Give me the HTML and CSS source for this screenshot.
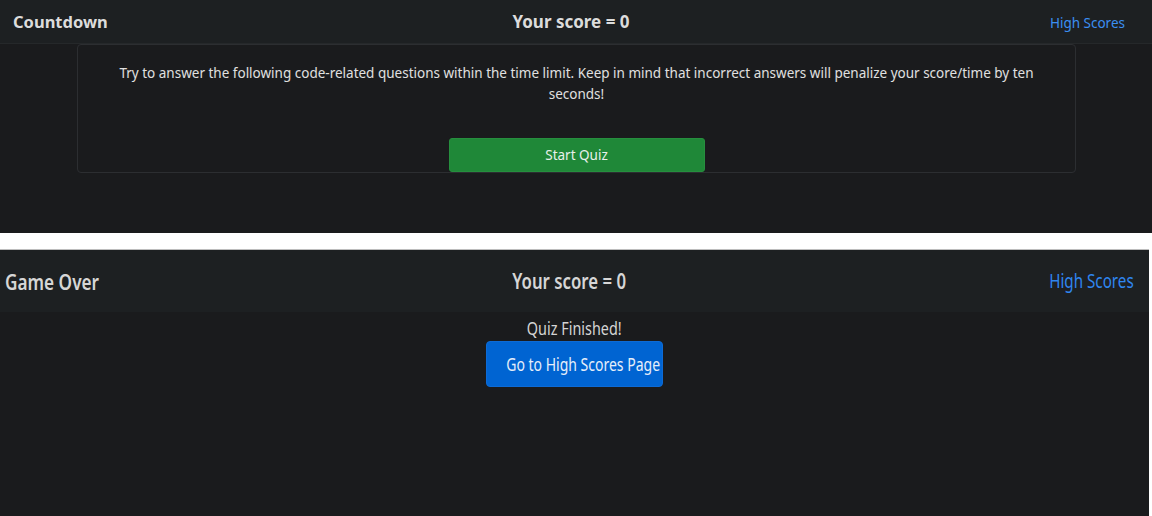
FILE: index.html
```html
<!DOCTYPE html>
<html>
<head>
<meta charset="utf-8">
<link rel="stylesheet" href="styles.css">
</head>
<body>
<section class="shot shot-top">
  <nav class="nav">
    <div class="nav-title">Countdown</div>
    <div class="nav-score">Your score = 0</div>
    <div class="nav-link-wrap"><a class="nav-link" href="#">High Scores</a></div>
  </nav>
  <div class="card">
    <p class="intro">Try to answer the following code-related questions within the time limit. Keep in mind that incorrect answers will penalize your score/time by ten seconds!</p>
    <button class="btn-start">Start Quiz</button>
  </div>
</section>
<div class="divider"></div>
<section class="shot shot-bottom">
  <nav class="nav2">
    <div class="nav2-title"><span class="cond cond-left">Game Over</span></div>
    <div class="nav2-score"><span class="cond">Your score = 0</span></div>
    <div class="nav2-link-wrap"><a class="nav2-link" href="#"><span class="cond cond-right">High Scores</span></a></div>
  </nav>
  <div class="finish">
    <div class="finish-text"><span class="cond">Quiz Finished!</span></div>
    <button class="btn-hs"><span class="cond">Go to High Scores Page</span></button>
  </div>
</section>
</body>
</html>
```
FILE: styles.css
```css
* { box-sizing: border-box; }
html, body { margin: 0; padding: 0; }
body {
  background: #ffffff;
  width: 1152px;
  height: 516px;
  overflow: hidden;
  font-family: "Noto Sans", "Open Sans", sans-serif;
  color: #dee2e6;
}
.shot-top {
  height: 233px;
  background: #1a1b1d;
}
.nav {
  height: 44px;
  background: #1d2022;
  border-bottom: 1px solid #25282a;
  display: grid;
  grid-template-columns: 1fr auto 1fr;
  align-items: center;
  padding: 0 27px 0 13px;
}
.nav-title {
  font-size: 16.5px;
  font-weight: 700;
  color: #dcdcdc;
}
.nav-score {
  font-size: 17px;
  font-weight: 700;
  color: #dcdcdc;
  padding-left: 4px;
}
.nav-link-wrap { text-align: right; }
.nav-link {
  font-size: 13.5px;
  color: #3b8ff2;
  text-decoration: none;
}
.card {
  margin: 0 76px 0 77px;
  border: 1px solid #2c2e31;
  border-radius: 4px;
  display: flex;
  flex-direction: column;
  align-items: center;
  padding: 18px 30px 0;
  height: 129px;
}
.intro {
  margin: 0;
  font-size: 13.5px;
  line-height: 21px;
  text-align: center;
  color: #e0e0e0;
}
.btn-start {
  margin-top: 33px;
  width: 256px;
  height: 34px;
  background: #1f8838;
  border: 1px solid #268f3e;
  border-radius: 3px;
  color: #e8f0ea;
  font-family: inherit;
  font-size: 13.5px;
}
.divider {
  height: 16px;
  background: #ffffff;
}
.shot-bottom {
  width: 1149px;
  height: 267px;
  background: #1a1b1d;
  border-top: 1px solid #bdbdbd;
}
.cond {
  display: inline-block;
  white-space: nowrap;
  transform: scaleX(0.8);
  transform-origin: center;
}
.cond-left { transform-origin: left center; }
.cond-right { transform-origin: right center; }
.nav2 {
  height: 62px;
  background: #1d2022;
  display: grid;
  grid-template-columns: 1fr auto 1fr;
  align-items: center;
  padding: 0 15px 0 5px;
}
.nav2-title {
  font-size: 21.5px;
  font-weight: 600;
  color: #d6d6d6;
}
.nav2-score {
  font-size: 21px;
  font-weight: 600;
  color: #d6d6d6;
}
.nav2-link-wrap { text-align: right; }
.nav2-link {
  font-size: 19px;
  color: #2f86f0;
  text-decoration: none;
}
.finish {
  display: flex;
  flex-direction: column;
  align-items: center;
  padding-top: 4px;
}
.finish-text {
  font-size: 18px;
  color: #d4d4d4;
  line-height: 24px;
}
.btn-hs {
  margin-top: 1px;
  width: 177px;
  height: 46px;
  background: #0064d2;
  border: 1px solid #0d6bd6;
  border-radius: 4px;
  color: #e6eefa;
  font-family: inherit;
  font-size: 17.5px;
  padding: 0;
}
```
